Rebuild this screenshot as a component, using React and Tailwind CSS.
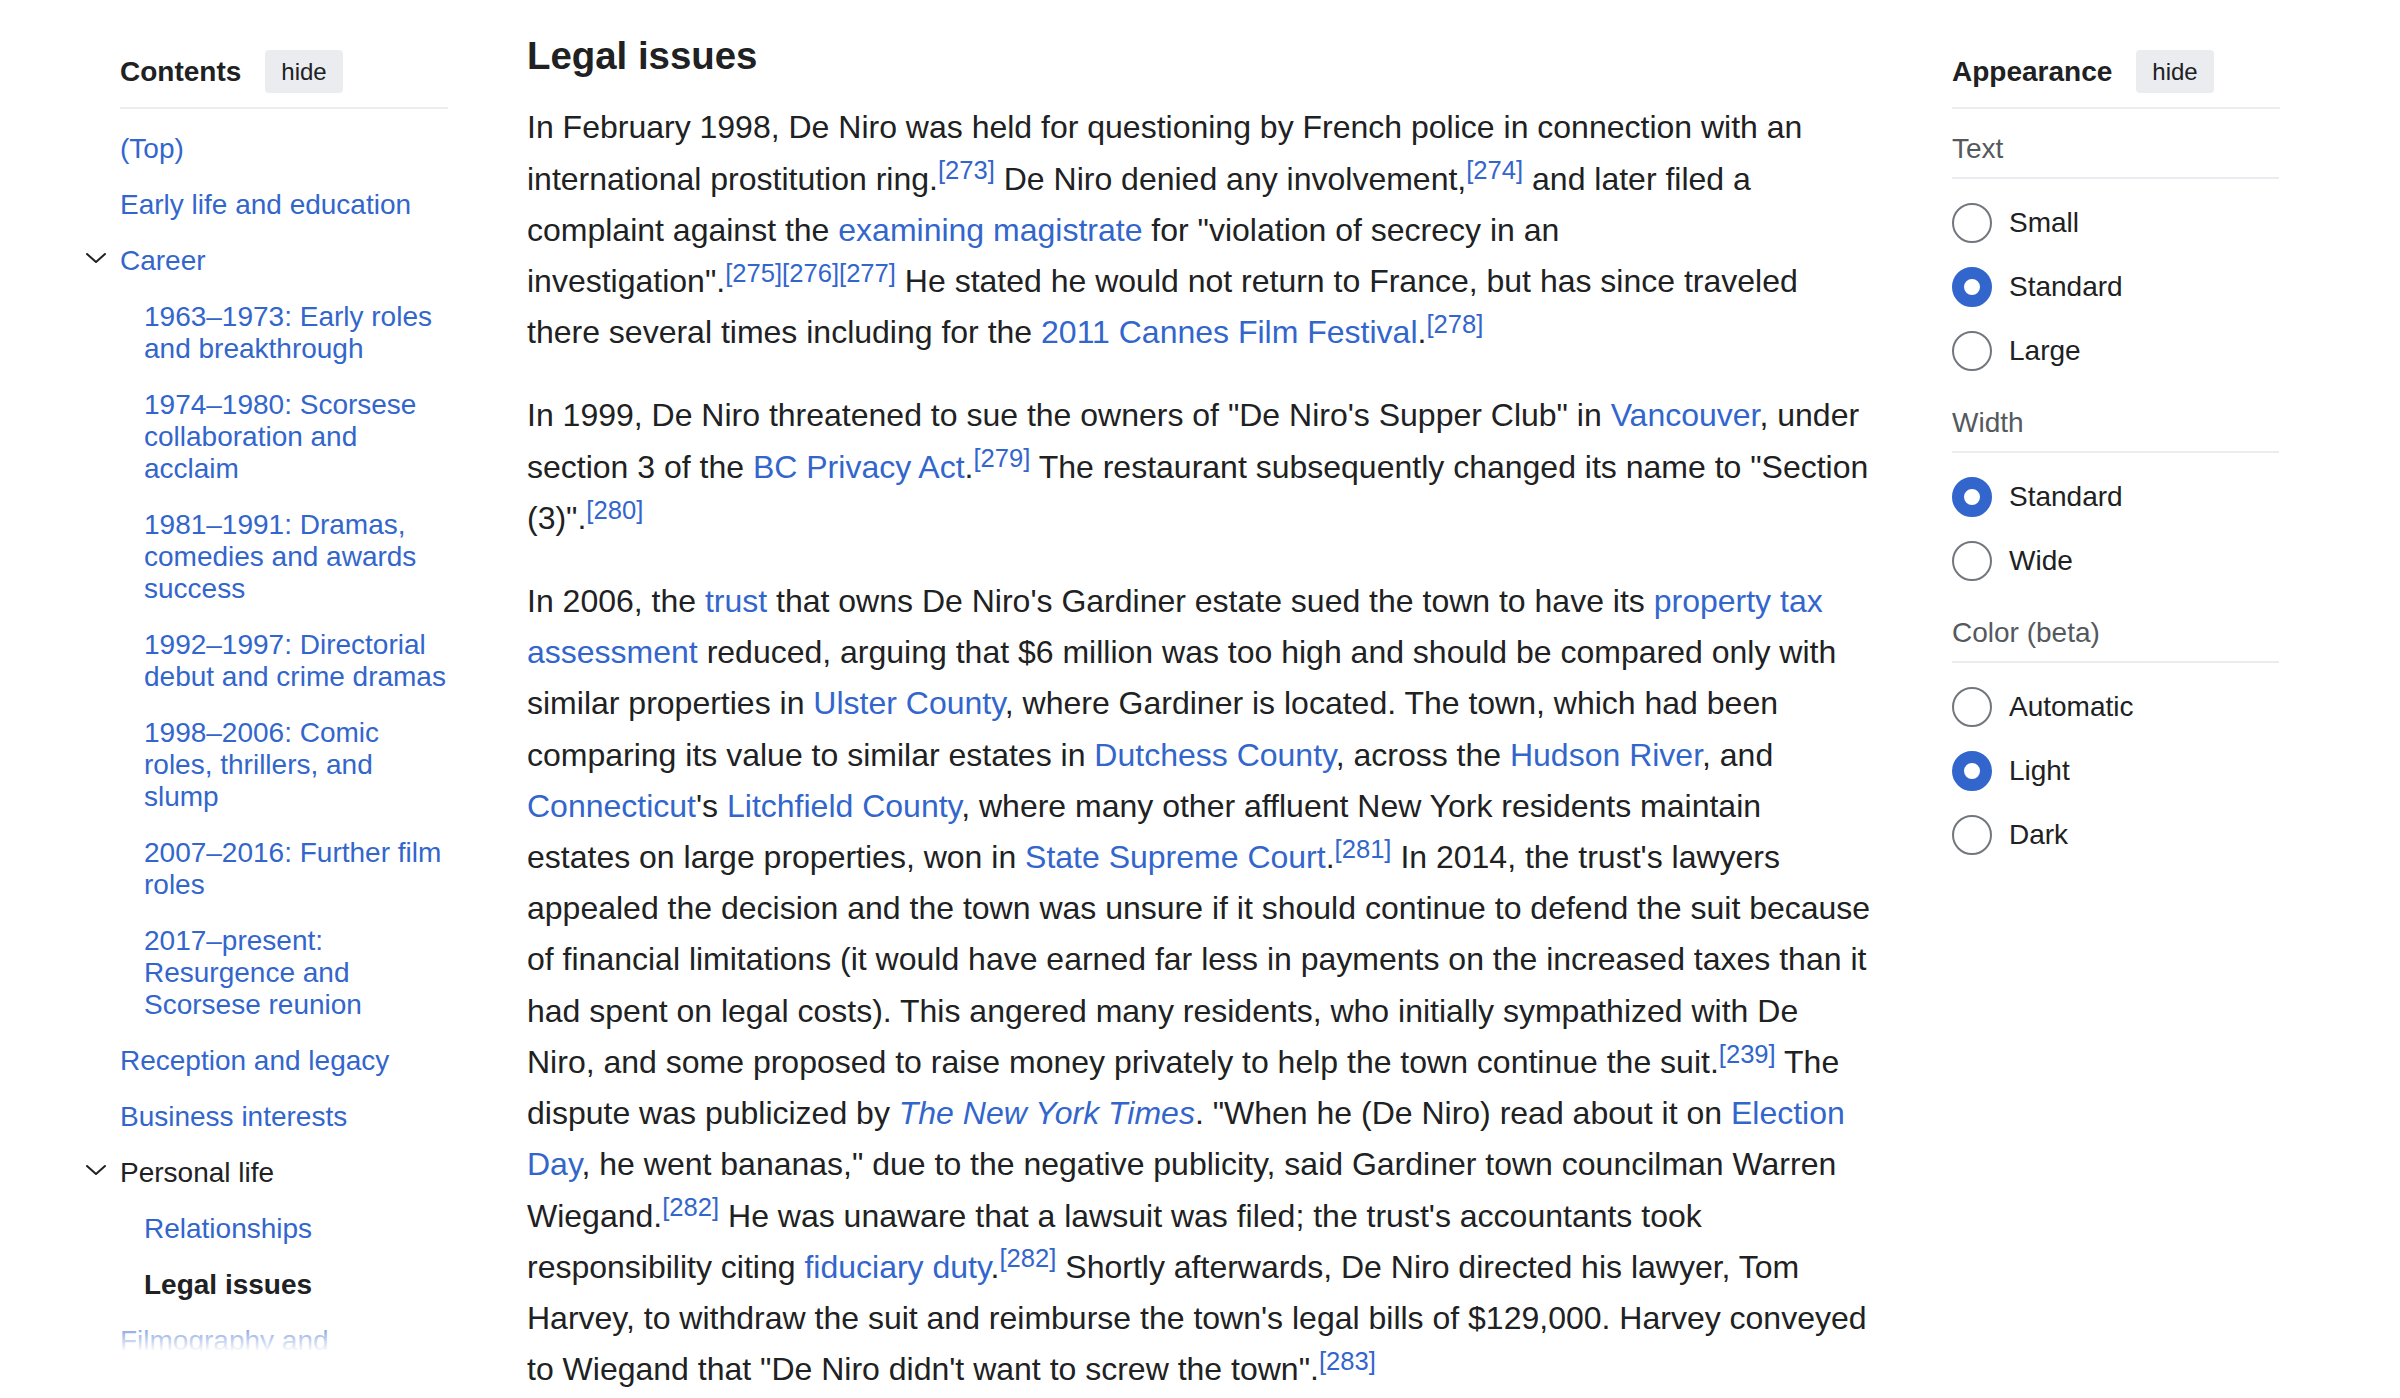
import React from "react";

const L = ({ children, it }) => (
  <a className={it ? "text-[#3366cc] italic" : "text-[#3366cc]"}>{children}</a>
);
const R = ({ children }) => (
  <sup className="text-[25.6px] text-[#3366cc] top-[-0.4em]">{children}</sup>
);
const N = ({ children }) => <span className="whitespace-nowrap">{children}</span>;

const Chevron = () => (
  <svg width="20" height="10" viewBox="0 0 20 10" fill="none">
    <polyline points="1,1 10,9 19,1" stroke="#202122" strokeWidth="2" strokeLinecap="round" strokeLinejoin="round" />
  </svg>
);

const toc = [
  { t: "(Top)", lv: 0 },
  { t: "Early life and education", lv: 0 },
  { t: "Career", lv: 0, chev: true },
  { t: "1963–1973: Early roles and breakthrough", lv: 1 },
  { t: "1974–1980: Scorsese collaboration and acclaim", lv: 1 },
  { t: "1981–1991: Dramas, comedies and awards success", lv: 1 },
  { t: "1992–1997: Directorial debut and crime dramas", lv: 1 },
  { t: "1998–2006: Comic roles, thrillers, and slump", lv: 1 },
  { t: "2007–2016: Further film roles", lv: 1 },
  { t: "2017–present: Resurgence and Scorsese reunion", lv: 1 },
  { t: "Reception and legacy", lv: 0 },
  { t: "Business interests", lv: 0 },
  { t: "Personal life", lv: 0, chev: true, dark: true },
  { t: "Relationships", lv: 1 },
  { t: "Legal issues", lv: 1, current: true },
  { t: "Filmography and accolades", lv: 0 },
];

const Header = ({ title }) => (
  <>
    <div className="pt-[50px]">
      <div className="flex items-center h-[43px]">
        <span className="text-[28px] leading-[36px] font-bold text-[#202122]">{title}</span>
        <button className="ml-[24px] h-[43px] px-[16px] rounded-[4px] bg-[#eaecf0] text-[24px] leading-none text-[#202122]">
          hide
        </button>
      </div>
    </div>
    <div className="mt-[14px] h-[2px] w-[328px] bg-[#eaecf0]" />
  </>
);

const Radio = ({ label, checked }) => (
  <div className="flex items-center h-[64px]">
    {checked ? (
      <span className="w-[40px] h-[40px] rounded-full border-[12px] border-[#3366cc] bg-white shrink-0" />
    ) : (
      <span className="w-[40px] h-[40px] rounded-full border-2 border-[#72777d] bg-white shrink-0" />
    )}
    <span className="ml-[17px] text-[28px] leading-[32px] text-[#202122]">{label}</span>
  </div>
);

const Section = ({ title, options }) => (
  <>
    <div className="pt-[24px] pb-[12px] border-b-2 border-[#eaecf0] text-[28px] leading-[32px] text-[#54595d]">
      {title}
    </div>
    <div className="mt-[12px]">
      {options.map((o) => (
        <Radio key={o[0]} label={o[0]} checked={o[1]} />
      ))}
    </div>
  </>
);

export default function App() {
  return (
    <div className="w-[2400px] h-[1398px] overflow-hidden bg-white text-[#202122] font-['Liberation_Sans',Arial,sans-serif]">
      <div className="flex items-start">
        {/* Table of contents */}
        <nav className="ml-[86px] w-[364px] shrink-0">
          <div className="pl-[34px]">
            <Header title="Contents" />
          </div>
          <div className="relative mt-[12px] h-[1231px] overflow-hidden pl-[34px]">
            {toc.map((it) => (
              <div
                key={it.t}
                className={
                  it.lv
                    ? "flex py-[12px] pl-[24px] text-[28px] leading-[32px]"
                    : "flex py-[12px] text-[28px] leading-[32px]"
                }
              >
                {it.chev && (
                  <span className="-ml-[34px] w-[34px] shrink-0 pt-[8px] flex items-start">
                    <Chevron />
                  </span>
                )}
                <span
                  className={
                    it.current
                      ? "font-bold text-[#202122]"
                      : it.dark
                      ? "text-[#202122]"
                      : "text-[#3366cc]"
                  }
                >
                  {it.t}
                </span>
              </div>
            ))}
            <div className="absolute left-0 right-0 top-[1191px] h-[40px] bg-linear-to-b from-white/0 to-white" />
          </div>
        </nav>

        {/* Main content */}
        <main className="ml-[77px] w-[1345px] shrink-0 pt-[25px]">
          <h3 className="text-[38.4px] leading-[61.44px] font-bold text-[#202122]">Legal issues</h3>
          <p className="mt-[16px] mb-[32px] text-[32px] leading-[51.2px]">
            In February 1998, De Niro was held for questioning by French police in connection with an
            international <N>prostitution ring.<R>[273]</R></N> De Niro denied any{" "}
            <N>involvement,<R>[274]</R></N> and later filed a complaint against the{" "}
            <L>examining magistrate</L> for "violation of secrecy in an{" "}
            <N>
              investigation".<R>[275]</R><R>[276]</R><R>[277]</R>
            </N>{" "}
            He stated he would not return to France, but has since traveled there several times including
            for the <L>2011 Cannes Film Festival</L>
            <N>.<R>[278]</R></N>
          </p>
          <p className="mb-[32px] text-[32px] leading-[51.2px]">
            In 1999, De Niro threatened to sue the owners of "De Niro's Supper Club" in <L>Vancouver</L>,
            under section 3 of the <L>BC Privacy Act</L>
            <N>.<R>[279]</R></N> The restaurant subsequently changed its name to "Section{" "}
            <N>(3)".<R>[280]</R></N>
          </p>
          <p className="mb-[32px] text-[32px] leading-[51.2px]">
            In 2006, the <L>trust</L> that owns De Niro's Gardiner estate sued the town to have its{" "}
            <L>property tax assessment</L> reduced, arguing that $6 million was too high and should be
            compared only with similar properties in <L>Ulster County</L>, where Gardiner is located. The
            town, which had been comparing its value to similar estates in <L>Dutchess County</L>, across the{" "}
            <L>Hudson River</L>, and <L>Connecticut</L>'s <L>Litchfield County</L>, where many other affluent
            New York residents maintain estates on large properties, won in <L>State Supreme Court</L>
            <N>.<R>[281]</R></N> In 2014, the trust's lawyers appealed the decision and the town was unsure
            if it should continue to defend the suit because of financial limitations (it would have earned
            far less in payments on the increased taxes than it had spent on legal costs). This angered many
            residents, who initially sympathized with De Niro, and some proposed to raise money privately to
            help the town continue the <N>suit.<R>[239]</R></N> The dispute was publicized by{" "}
            <L it>The New York Times</L>. "When he (De Niro) read about it on <L>Election Day</L>, he went
            bananas," due to the negative publicity, said Gardiner town councilman Warren{" "}
            <N>Wiegand.<R>[282]</R></N> He was unaware that a lawsuit was filed; the trust's accountants took
            responsibility citing <L>fiduciary duty</L>
            <N>.<R>[282]</R></N> Shortly afterwards, De Niro directed his lawyer, Tom Harvey, to withdraw the
            suit and reimburse the town's legal bills of $129,000. Harvey conveyed to Wiegand that "De Niro
            didn't want to screw the <N>town".<R>[283]</R></N>
          </p>
        </main>

        {/* Appearance panel */}
        <aside className="ml-[80px] w-[327px] shrink-0">
          <Header title="Appearance" />
          <Section title="Text" options={[["Small", false], ["Standard", true], ["Large", false]]} />
          <Section title="Width" options={[["Standard", true], ["Wide", false]]} />
          <Section
            title="Color (beta)"
            options={[["Automatic", false], ["Light", true], ["Dark", false]]}
          />
        </aside>
      </div>
    </div>
  );
}
